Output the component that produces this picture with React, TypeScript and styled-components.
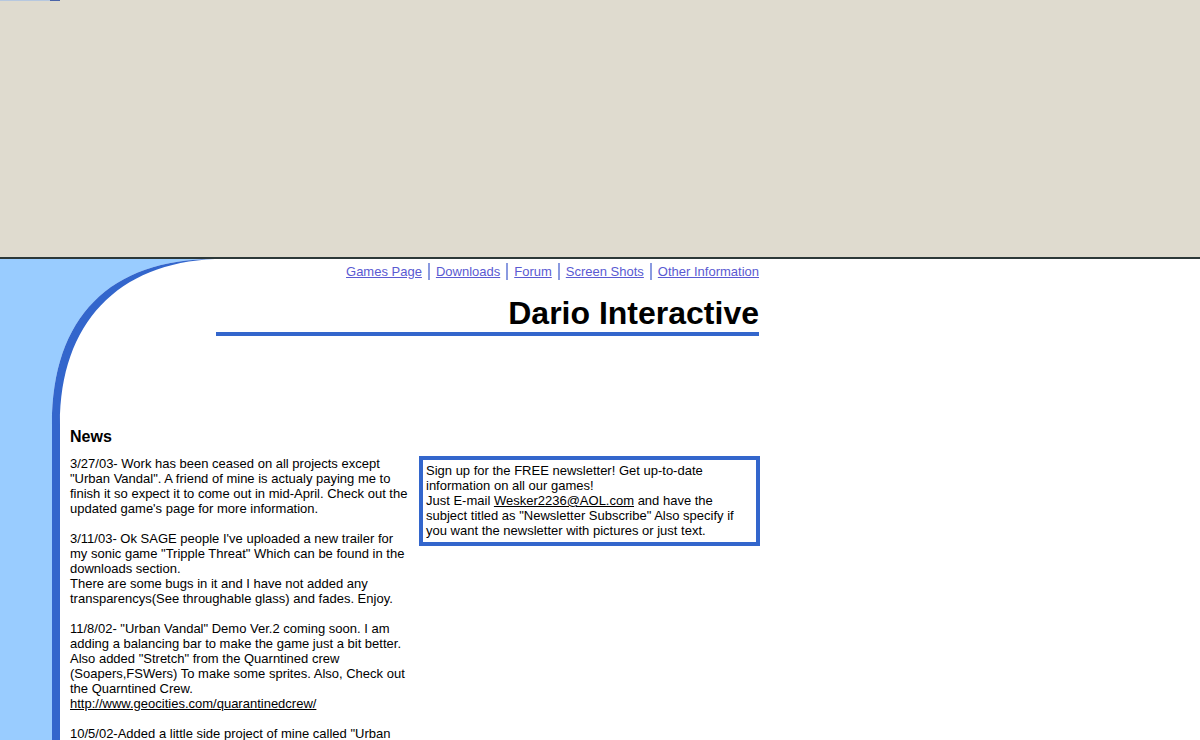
import styled, { createGlobalStyle } from "styled-components";

const GlobalStyle = createGlobalStyle`
  html, body {
    margin: 0;
    padding: 0;
    background: #ffffff;
  }
  body {
    font-family: "Liberation Sans", Arial, sans-serif;
    color: #000000;
  }
`;

const blue = "#3366cc";
const lightBlue = "#99ccff";

const Banner = styled.div`
  height: 257px;
  background: #dfdbcf;
  border-bottom: 2px solid #2c3838;
`;

const BannerStrip = styled.div`
  display: flex;
  height: 1px;
`;

const StripPart = styled.div<{ $w: number; $c: string }>`
  width: ${(p) => p.$w}px;
  background: ${(p) => p.$c};
`;

const HeaderRow = styled.div`
  display: flex;
  align-items: flex-start;
`;

const Corner = styled.svg`
  display: block;
  flex: none;
`;

const HeaderBody = styled.div`
  width: 543px;
  padding-top: 4px;
`;

const Nav = styled.nav`
  display: flex;
  justify-content: flex-end;
  align-items: center;
  height: 17px;
  font-size: 13px;
  line-height: 17px;
`;

const NavLink = styled.a`
  color: #5a5ad2;
  text-decoration: underline;
`;

const Sep = styled.span`
  display: inline-block;
  width: 2px;
  height: 17px;
  margin: 0 6px;
  background: #8a9ae0;
`;

const Title = styled.h1`
  margin: 15px 0 0;
  text-align: right;
  font-size: 32px;
  font-weight: bold;
  line-height: 37px;
  border-bottom: 4px solid ${blue};
`;

const BodyRow = styled.div`
  display: flex;
  min-height: 316px;
`;

const Sidebar = styled.div`
  width: 52px;
  flex: none;
  background: ${lightBlue};
  border-right: 8px solid ${blue};
`;

const Content = styled.div`
  width: 690px;
  padding: 4px 0 0 10px;
`;

const Heading = styled.h3`
  margin: 0 0 10px;
  font-size: 16px;
  line-height: 18px;
  font-weight: bold;
`;

const Columns = styled.div`
  display: flex;
  align-items: flex-start;
  gap: 9px;
`;

const NewsColumn = styled.div`
  width: 340px;
  font-size: 13px;
  line-height: 15px;
`;

const NewsItem = styled.p`
  margin: 0 0 15px;
`;

const PlainLink = styled.a`
  color: #000000;
  text-decoration: underline;
`;

const SignupBox = styled.div`
  width: 327px;
  padding: 3px 3px 4px 3px;
  border: 4px solid ${blue};
  font-size: 13px;
  line-height: 15px;
`;

export default function App() {
  return (
    <>
      <GlobalStyle />
      <Banner>
        <BannerStrip>
          <StripPart $w={50} $c="#b7c8df" />
          <StripPart $w={10} $c="#4a64a8" />
        </BannerStrip>
      </Banner>

      <HeaderRow>
        <Corner width="216" height="165" viewBox="0 0 216 165">
          <path d="M0,0 L216,0 L215,0 C110,0 52,58 52,165 L0,165 Z" fill={lightBlue} />
          <path d="M215,0 C110,0 52,58 52,165 L60,165 C60,64 118,4 215,0 Z" fill={blue} />
        </Corner>
        <HeaderBody>
          <Nav>
            <NavLink href="#">Games Page</NavLink>
            <Sep />
            <NavLink href="#">Downloads</NavLink>
            <Sep />
            <NavLink href="#">Forum</NavLink>
            <Sep />
            <NavLink href="#">Screen Shots</NavLink>
            <Sep />
            <NavLink href="#">Other Information</NavLink>
          </Nav>
          <Title>Dario Interactive</Title>
        </HeaderBody>
      </HeaderRow>

      <BodyRow>
        <Sidebar />
        <Content>
          <Heading>News</Heading>
          <Columns>
            <NewsColumn>
              <NewsItem>
                3/27/03- Work has been ceased on all projects except "Urban Vandal". A friend of
                mine is actualy paying me to finish it so expect it to come out in mid-April. Check
                out the updated game's page for more information.
              </NewsItem>
              <NewsItem>
                3/11/03- Ok SAGE people I've uploaded a new trailer for my sonic game "Tripple
                Threat" Which can be found in the downloads section.
                <br />
                There are some bugs in it and I have not added any transparencys(See throughable
                glass) and fades. Enjoy.
              </NewsItem>
              <NewsItem>
                11/8/02- "Urban Vandal" Demo Ver.2 coming soon. I am adding a balancing bar to make
                the game just a bit better. Also added "Stretch" from the Quarntined crew
                (Soapers,FSWers) To make some sprites. Also, Check out the Quarntined Crew.
                <br />
                <PlainLink href="#">http://www.geocities.com/quarantinedcrew/</PlainLink>
              </NewsItem>
              <NewsItem>
                10/5/02-Added a little side project of mine called "Urban Fighter". It is a small
                fighting game with the characters from Urban Vandal. Check the downloads section.
              </NewsItem>
            </NewsColumn>
            <SignupBox>
              Sign up for the FREE newsletter! Get up-to-date information on all our games!
              <br />
              Just E-mail <PlainLink href="#">Wesker2236@AOL.com</PlainLink> and have the subject
              titled as "Newsletter Subscribe" Also specify if you want the newsletter with pictures
              or just text.
            </SignupBox>
          </Columns>
        </Content>
      </BodyRow>
    </>
  );
}
